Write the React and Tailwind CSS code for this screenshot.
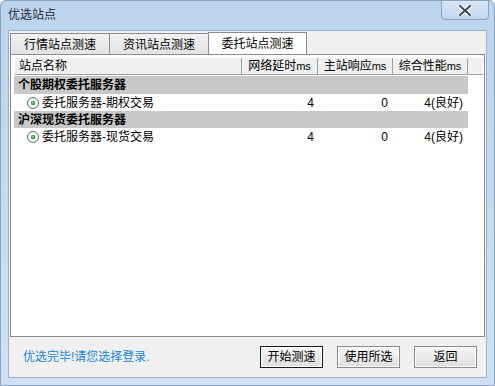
import React from "react";

const font = "font-['Liberation_Sans','Noto_Sans_CJK_SC',sans-serif]";

const tabs = ["行情站点测速", "资讯站点测速", "委托站点测速"];

const groups = [
  { name: "个股期权委托服务器", item: "委托服务器-期权交易", delay: "4", resp: "0", perf: "4(良好)" },
  { name: "沪深现货委托服务器", item: "委托服务器-现货交易", delay: "4", resp: "0", perf: "4(良好)" },
];

const HeadCell = ({ w, children, left }) => (
  <div
    className={`${w} h-full flex items-center border-r border-[#a0a0a0] ${left ? "pl-[4px]" : "justify-center"} whitespace-nowrap`}
  >
    {children}
  </div>
);

const Radio = () => (
  <svg width="12" height="12" viewBox="0 0 12 12" className="shrink-0">
    <circle cx="6" cy="6" r="5.5" fill="#f4f4f4" stroke="#5a6a7a" strokeWidth="1" />
    <circle cx="6" cy="6" r="4" fill="#ffffff" />
    <circle cx="6" cy="6" r="2.2" fill="#2ea82e" />
    <circle cx="5.5" cy="5.5" r="0.9" fill="#9be39b" />
  </svg>
);

const Btn = ({ children, main }) => (
  <button
    className={`w-[63px] h-[22px] text-[12px] text-black bg-gradient-to-b from-[#f6f6f6] to-[#dedede] ${
      main ? "border border-[#1a1a1a] shadow-[inset_0_0_0_1px_#ffffff]" : "border border-[#8a8a8a] shadow-[inset_0_0_0_1px_#ffffff]"
    }`}
  >
    {children}
  </button>
);

export default function App() {
  return (
    <div className={`${font} w-[495px] h-[386px] flex flex-col bg-gradient-to-b from-[#bcd4ee] to-[#cfe0f2] border border-[#8aa2be] rounded-t-[6px] overflow-hidden`}>
      {/* title bar */}
      <div className="relative h-[29px] shrink-0">
        <div className="pl-[7px] pt-[5px] text-[12px] text-[#1e2a38]">优选站点</div>
        <div className="absolute right-[5px] top-[-1px] w-[48px] h-[20px] rounded-b-[4px] border border-[#8aa2be] bg-gradient-to-b from-[#d8e6f5] to-[#c2d6ec] flex items-center justify-center">
          <svg width="14" height="11" viewBox="0 0 14 11">
            <path d="M2 1 L12 10 M12 1 L2 10" stroke="#ffffff" strokeWidth="4" strokeLinecap="square" />
            <path d="M2 1 L12 10 M12 1 L2 10" stroke="#3c4a5c" strokeWidth="2" strokeLinecap="square" />
          </svg>
        </div>
      </div>

      {/* client */}
      <div className="flex-1 mx-[7px] mb-[7px] bg-[#f0f0f0] border border-[#9fb2c8] flex flex-col">
        {/* tab strip */}
        <div className="flex h-[22px] mt-[1px] ml-[1px] shrink-0">
          {tabs.map((t, i) => (
            <div
              key={t}
              className={`h-full flex items-center justify-center text-[12px] text-black border-t border-l border-[#898c95] ${
                i === 2 ? "w-[99px] bg-white border-r" : "w-[99px] bg-gradient-to-b from-[#f2f2f2] to-[#e2e2e2] mt-[1px]"
              }`}
            >
              {t}
            </div>
          ))}
        </div>

        {/* panel */}
        <div className="h-[283px] mx-[1px] -mt-[0px] border border-[#898c95] bg-white pt-[2px] pl-[3px] pr-[1px] flex flex-col">
          <div className="flex h-[18px] text-[12px] text-black bg-[#f0f0f0] border-t border-l border-[#ffffff] border-b border-b-[#a0a0a0]">
            <HeadCell w="w-[227px]" left>站点名称</HeadCell>
            <HeadCell w="w-[76px]">
              网络延时<span className="text-[11px]">ms</span>
            </HeadCell>
            <HeadCell w="w-[75px]">
              主站响应<span className="text-[11px]">ms</span>
            </HeadCell>
            <HeadCell w="w-[75px]">
              综合性能<span className="text-[11px]">ms</span>
            </HeadCell>
            <div className="flex-1" />
          </div>

          <div className="w-[454px] mt-[1px] text-[12px] text-black">
            {groups.map((g, i) => (
              <div key={g.name}>
                <div className={`${i === 0 ? "h-[18px]" : "h-[17px]"} bg-[#c8c8c8] flex items-center pl-[4px] font-bold`}>
                  {g.name}
                </div>
                <div className={`${i === 0 ? "h-[17px]" : "h-[18px]"} flex items-center`}>
                  <div className="w-[227px] flex items-center gap-[3px] pl-[13px]">
                    <Radio />
                    <span>{g.item}</span>
                  </div>
                  <div className="w-[76px] text-right pr-[3px]">{g.delay}</div>
                  <div className="w-[75px] text-right pr-[4px]">{g.resp}</div>
                  <div className="w-[75px] text-right pr-[4px]">{g.perf}</div>
                </div>
              </div>
            ))}
          </div>
        </div>

        {/* bottom */}
        <div className="flex-1 flex items-center pl-[14px] pr-[9px]">
          <span className="text-[12px] text-[#1a84d8]">优选完毕!请您选择登录.</span>
          <div className="ml-auto flex gap-[14px]">
            <Btn main>开始测速</Btn>
            <Btn>使用所选</Btn>
            <Btn>返回</Btn>
          </div>
        </div>
      </div>
    </div>
  );
}
